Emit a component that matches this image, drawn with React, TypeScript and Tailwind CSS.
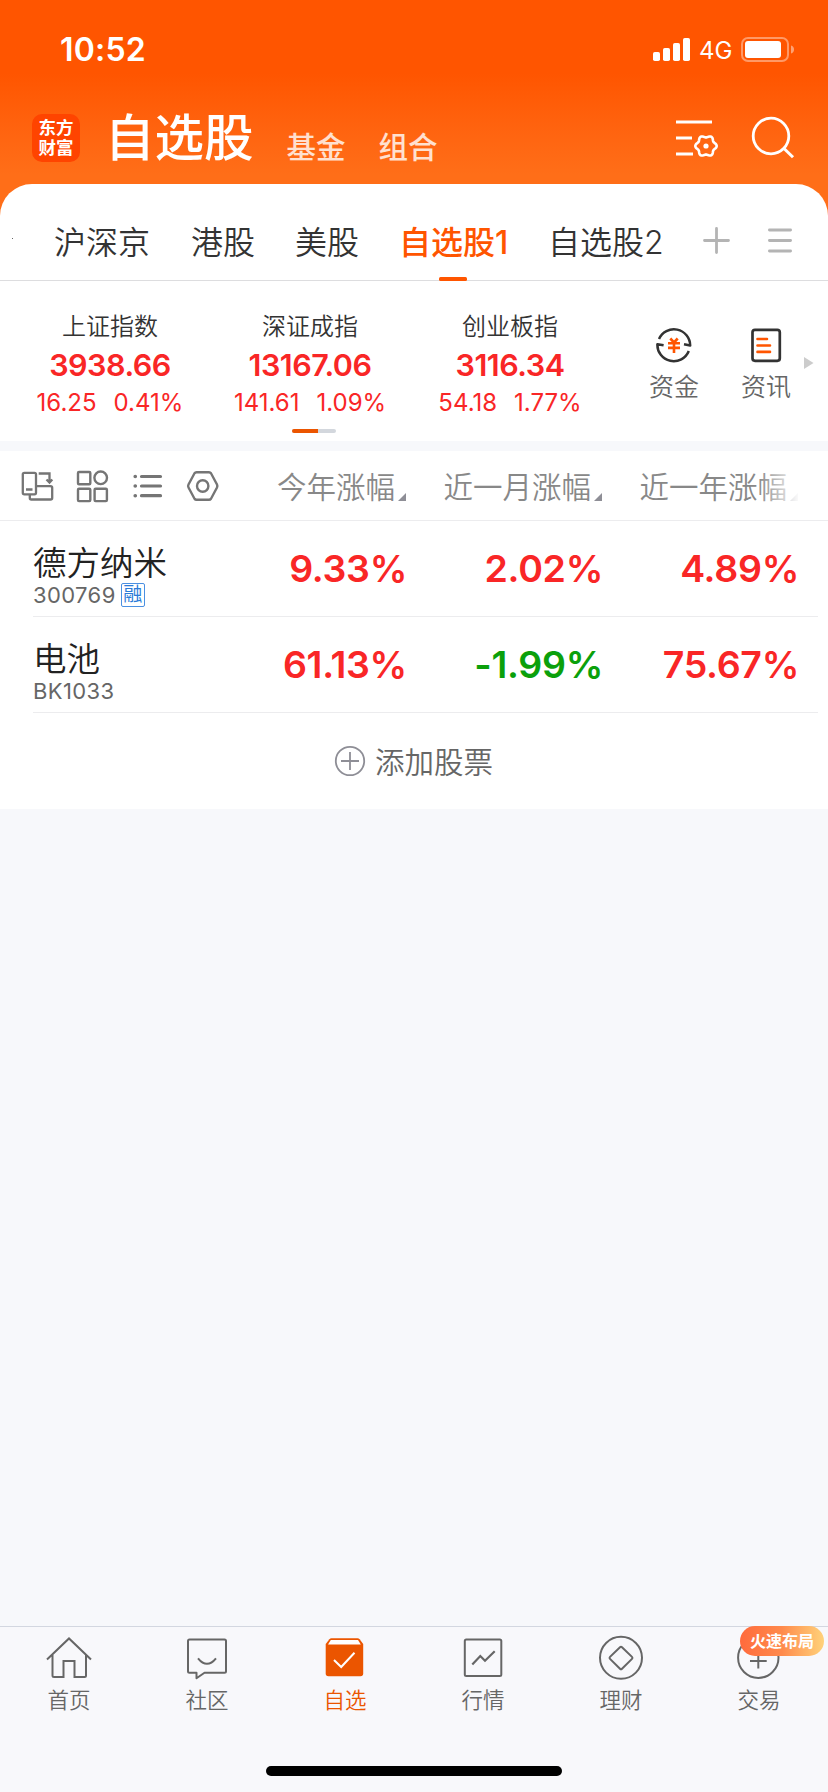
import type { ReactNode } from "react";

interface IndexQuote {
  name: string;
  value: string;
  change: string;
  percent: string;
}

interface StockRow {
  name: string;
  code: string;
  margin?: boolean;
  values: string[];
}

const indices: IndexQuote[] = [
  { name: "上证指数", value: "3938.66", change: "16.25", percent: "0.41%" },
  { name: "深证成指", value: "13167.06", change: "141.61", percent: "1.09%" },
  { name: "创业板指", value: "3116.34", change: "54.18", percent: "1.77%" },
];

const columns = ["今年涨幅", "近一月涨幅", "近一年涨幅"];

const stocks: StockRow[] = [
  { name: "德方纳米", code: "300769", margin: true, values: ["9.33%", "2.02%", "4.89%"] },
  { name: "电池", code: "BK1033", values: ["61.13%", "-1.99%", "75.67%"] },
];

// six-lobed outline of the settings gear
const gearPath = (() => {
  const pts: string[] = [];
  for (let i = 0; i < 72; i++) {
    const a = (i / 72) * Math.PI * 2;
    const r = 9.6 + 1.1 * Math.cos(6 * a);
    pts.push(`${(31 + r * Math.cos(a)).toFixed(2)} ${(31 + r * Math.sin(a)).toFixed(2)}`);
  }
  return `M${pts.join("L")}Z`;
})();

function StatusBar() {
  return (
    <div className="flex h-[88px] items-start justify-between pl-[60px] pr-[33px] text-white">
      <span className="mt-[34px] text-[32px] leading-none font-semibold tracking-[0.2px]">10:52</span>
      <div className="mt-[36px] flex h-[27px] items-center">
        <svg className="h-[27px] w-[38px]" viewBox="0 0 38 27" fill="currentColor">
          <rect x="0" y="16" width="7" height="9" rx="1.8" />
          <rect x="10" y="12" width="7" height="13" rx="1.8" />
          <rect x="20" y="7" width="7" height="18" rx="1.8" />
          <rect x="30" y="2" width="7" height="23" rx="1.8" />
        </svg>
        <span className="ml-[8px] w-[42px] pt-[2px] text-[24px] leading-none">4G</span>
        <svg className="h-[27px] w-[54px]" viewBox="0 0 54 27">
          <rect x="1" y="2" width="46" height="23" rx="6" fill="none" stroke="#fff" strokeOpacity="0.4" strokeWidth="2" />
          <rect x="4" y="5" width="36" height="17" rx="3" fill="#fff" />
          <path d="M50 9.500c2 .6 3 2 3 4s-1 3.400-3 4z" fill="#fff" fillOpacity="0.45" />
        </svg>
      </div>
    </div>
  );
}

function Header() {
  return (
    <header className="h-[184px] shrink-0 bg-linear-to-b from-[#ff5500] from-40% to-[#ff6e18] to-95%">
      <StatusBar />
      <div className="flex h-[96px] items-start pl-[32px] pr-[33px] text-white">
        <div className="mt-[26px] flex h-[48px] w-[48px] flex-col items-center justify-center rounded-[10px] bg-[#ff4400] text-[17.500px] leading-[20px] font-bold">
          <span>东方</span>
          <span>财富</span>
        </div>
        <h1 className="ml-[25px] mt-[26px] text-[49.500px] leading-none font-medium">自选股</h1>
        <span className="ml-[33px] mt-[45px] text-[29.500px] leading-none font-medium text-white/80">基金</span>
        <span className="ml-[33px] mt-[45px] text-[29.500px] leading-none font-medium text-white/80">组合</span>
        <div className="mt-[27px] ml-auto flex gap-[32px]">
          <svg className="h-[42px] w-[44px]" viewBox="0 0 44 42" fill="none" stroke="currentColor" strokeWidth="2.8">
            <path d="M1 7H37M1 23H17M1 39H18" />
            <path d={gearPath} strokeLinejoin="round" strokeWidth="2.600" />
            <circle cx="31" cy="31" r="2.600" fill="currentColor" stroke="none" />
          </svg>
          <svg className="h-[44px] w-[44px]" viewBox="0 0 44 44" fill="none" stroke="currentColor" strokeWidth="2.800">
            <circle cx="20" cy="21" r="17.800" />
            <path d="M33 33.500L42 42.300" strokeWidth="3" />
          </svg>
        </div>
      </div>
    </header>
  );
}

function GroupTabs() {
  return (
    <nav className="flex h-[97px] items-start border-b border-[#dddddf] pt-[42px] text-[32px] leading-none text-[#333]">
      <span className="mt-[12px] ml-[12px] h-px w-px bg-[#666]" />
      <span className="mt-px ml-[41px] w-[137px] font-[350]">沪深京</span>
      <span className="mt-px w-[104px] font-[350]">港股</span>
      <span className="mt-px w-[104px] font-[350]">美股</span>
      <span className="relative mt-px w-[149px] font-medium text-[#ff5500]">
        自选股1
        <span className="absolute top-[50px] left-[40px] h-[4px] w-[28px] rounded-[1.500px] bg-[#ff5500]" />
      </span>
      <span className="mt-px w-[155px] font-[350]">自选股2</span>
      <svg className="mt-px h-[27px] w-[27px]" viewBox="0 0 27 27" stroke="#b4b4b4" strokeWidth="2.800" strokeLinecap="round">
        <path d="M1.500 13.500H25.500M13.500 1.500V25.500" />
      </svg>
      <svg className="mt-px ml-[38px] h-[27px] w-[24px]" viewBox="0 0 24 27" stroke="#b4b4b4" strokeWidth="2.800" strokeLinecap="round">
        <path d="M1.400 3H22.600M1.400 13.500H22.600M1.400 24H22.600" />
      </svg>
    </nav>
  );
}

function IndexStrip() {
  return (
    <section className="relative flex h-[160px] pl-[10px]">
      {indices.map((q) => (
        <div key={q.name} className="flex w-[200px] flex-col items-center pt-[34px] text-[#f92626]">
          <span className="text-[24px] leading-none font-[350] text-[#333]">{q.name}</span>
          <span className="mt-[11px] text-[30.500px] leading-none font-semibold tracking-[-0.5px]">{q.value}</span>
          <span className="mt-[10px] flex gap-[17px] text-[24px] leading-none font-normal">
            <span>{q.change}</span>
            <span>{q.percent}</span>
          </span>
        </div>
      ))}
      <div className="ml-[18px] flex w-[92px] flex-col items-center pt-[44px] text-[25px] leading-none font-[350] text-[#666]">
        <svg className="h-[38px] w-[38px]" viewBox="0 0 38 38" fill="none" stroke="#333" strokeWidth="2.500">
          <path d="M4 14A16.300 16.300 0 0 1 35.200 20.500L29 19.200" strokeLinejoin="round" />
          <path d="M8.600 20.300L2.400 19.200A16.300 16.300 0 0 0 33.800 26" strokeLinejoin="round" />
          <path d="M15.300 13.500L19 17.500L22.700 13.500M13 18.300H25M13 22.900H25M19 17.500V28" stroke="#ff5500" strokeWidth="2.600" />
        </svg>
        <span className="mt-[12px]">资金</span>
      </div>
      <div className="flex w-[92px] flex-col items-center pt-[44px] text-[25px] leading-none font-[350] text-[#666]">
        <svg className="h-[38px] w-[38px]" viewBox="0 0 38 38" fill="none" stroke="#333" strokeWidth="2.700">
          <rect x="5.500" y="4.800" width="27.300" height="31" rx="2.500" />
          <path d="M10.500 14H20M10.500 20.500H23M10.500 26.900H23" stroke="#ff5500" strokeWidth="2.600" strokeLinecap="round" />
        </svg>
        <span className="mt-[12px]">资讯</span>
      </div>
      <svg className="mt-[76px] -ml-[8px] h-[12px] w-[10px]" viewBox="0 0 10 12" fill="#ccc">
        <path d="M0 0L9.500 6L0 12Z" />
      </svg>
      <div className="absolute bottom-[8px] left-[292px] flex h-[4px] w-[44px] overflow-hidden rounded-full bg-[#d3d7dd]">
        <span className="w-[26px] bg-[#eb5500]" />
      </div>
    </section>
  );
}

function TableHeader() {
  return (
    <div className="relative flex h-[70px] items-start border-b border-[#ececee] pt-[17px] pl-[20px]">
      <div className="flex w-[258px] text-[#757575]">
        <svg className="h-[36px] w-[54px]" viewBox="0 0 54 36" fill="none" stroke="currentColor" strokeWidth="2.300">
          <rect x="2.800" y="4.800" width="13.200" height="21.500" rx="1.500" />
          <path d="M6 21.500H12.500M18.700 5.500H29.500V14M26.500 11.500L29.500 14.500L32.300 11.500" />
          <path d="M9.800 26.500V30Q9.800 31.500 11.300 31.500H30.500Q32.200 31.500 32.200 30V19.800Q32.200 18.200 30.500 18.200H16.500" />
        </svg>
        <svg className="h-[36px] w-[56px]" viewBox="0 0 56 36" fill="none" stroke="currentColor" strokeWidth="2.400">
          <rect x="4" y="4" width="12.300" height="12.300" rx="1" />
          <circle cx="26.700" cy="9.800" r="6.300" />
          <rect x="4" y="20.800" width="12.300" height="12.300" rx="1" />
          <rect x="20.600" y="20.800" width="12.300" height="12.300" rx="1" />
        </svg>
        <svg className="h-[36px] w-[55px]" viewBox="0 0 55 36" fill="none" stroke="currentColor" strokeWidth="3.200" strokeLinecap="round">
          <path d="M11.500 8.500H30.500M11.500 18H30.500M11.500 27.700H30.500" />
          <path d="M5.200 8.500H5.300M5.200 18H5.300M5.200 27.700H5.300" strokeWidth="3.600" />
        </svg>
        <svg className="h-[36px] w-[36px]" viewBox="0 0 36 36" fill="none" stroke="currentColor" strokeWidth="2.400">
          <path d="M11.500 4.300H24Q25.300 4.300 26 5.300L32 16.500Q32.700 18 32 19.500L26 30.700Q25.300 31.700 24 31.700H11.500Q10.200 31.700 9.500 30.700L3.500 19.500Q2.700 18 3.500 16.500L9.500 5.300Q10.200 4.300 11.500 4.300Z" />
          <circle cx="17.700" cy="18" r="5.700" />
        </svg>
      </div>
      {columns.map((c, i) => (
        <div key={c} className={`flex justify-end ${i === 0 ? "w-[128px]" : "w-[196px]"}`}>
          <span className="mt-[5px] text-[29.500px] leading-none font-[350] whitespace-nowrap text-[#888]">{c}</span>
          <svg className="mt-[25px] ml-[3px] h-[8px] w-[8px] shrink-0" viewBox="0 0 8 8" fill="#8e8e96">
            <path d="M8 0V8H0Z" />
          </svg>
        </div>
      ))}
      <div className="absolute top-0 right-0 h-[68px] w-[70px] bg-linear-to-r from-white/0 to-white to-60%" />
    </div>
  );
}

function StockItem({ stock }: { stock: StockRow }) {
  return (
    <div className="mr-[10px] ml-[33px] flex h-[96px] border-b border-[#ececee]">
      <div className="w-[178px] pt-[26px]">
        <div className="text-[33.500px] leading-none font-[350] text-[#222]">{stock.name}</div>
        <div className="mt-px flex h-[26px] items-center text-[22px] leading-none font-normal tracking-[0.4px] text-[#666]">
          {stock.code}
          {stock.margin && (
            <span className="ml-[5px] flex h-[24px] w-[24px] items-center justify-center rounded-[2px] border border-[#4a90e2] text-[19px] tracking-normal text-[#2b7bd8]">
              融
            </span>
          )}
        </div>
      </div>
      {stock.values.map((v) => (
        <div
          key={v}
          className={`w-[196px] pt-[29px] text-right text-[37.500px] leading-none font-semibold tracking-[-0.3px] ${v.startsWith("-") ? "text-[#0ba00b]" : "text-[#f92626]"}`}
        >
          {v}
        </div>
      ))}
    </div>
  );
}

function TabItem({ label, active, children }: { label: string; active?: boolean; children: ReactNode }) {
  return (
    <div className={`relative flex w-[138px] flex-col items-center pt-[7px] ${active ? "text-[#eb5500]" : "text-[#666]"}`}>
      <svg className="h-[46px] w-[46px]" viewBox="0 0 46 46" fill="none" stroke="currentColor" strokeWidth="2">
        {children}
      </svg>
      <span className="mt-[10px] text-[21.500px] leading-none font-[350]">{label}</span>
      {label === "交易" && (
        <span className="absolute -top-px left-[50px] flex h-[30px] w-[84px] items-center justify-center rounded-full bg-linear-to-r from-[#ff6a3c] via-[#ff8a4c] to-[#ffd27a] text-[16px] leading-none font-bold text-white">
          火速布局
        </span>
      )}
    </div>
  );
}

function TabBar() {
  return (
    <footer className="h-[166px] shrink-0 border-t border-[#d3d7e0] bg-[#f8f8fb]">
      <div className="flex h-[139px]">
        <TabItem label="首页">
          <path d="M1 25.500L23 4.500L45 25.500M6.500 21V41.500Q6.500 43 8 43H17.500V27H28.500V43H38.500Q40 43 40 41.500V21" />
        </TabItem>
        <TabItem label="社区">
          <path d="M20.500 38.800H40.500Q42 38.800 42 37.300V7Q42 5.500 40.500 5.500H5.500Q4 5.500 4 7V37.300Q4 38.800 5.500 38.800H12.500V44.300Z" strokeLinejoin="round" />
          <path d="M14 24.300Q23 35.300 32 24.300" />
        </TabItem>
        <TabItem label="自选" active>
          <path d="M9.500 4.300H35.500Q36.800 4.300 37.600 5.200L41.200 10V39.500Q41.200 42.300 38.500 42.300H6.500Q3.700 42.300 3.700 39.500V10L7.400 5.200Q8.200 4.300 9.500 4.300Z" fill="currentColor" stroke="none" />
          <path d="M8.800 6H36L38.800 10.600H6Z" fill="#fff" stroke="none" />
          <path d="M12 26L19.200 33L32.500 18.700" stroke="#fff" strokeWidth="2" />
        </TabItem>
        <TabItem label="行情">
          <rect x="4.800" y="5.600" width="36.500" height="36.500" rx="1.500" />
          <path d="M12.300 30.500L20.300 22L25 26.700L34.700 17.300" strokeWidth="2.200" />
        </TabItem>
        <TabItem label="理财">
          <circle cx="23" cy="23.800" r="21" />
          <path d="M22 13.200Q23 12.200 24 13.200L34 22.900Q35 23.900 34 24.900L24 34.800Q23 35.800 22 34.800L12 24.900Q11 23.900 12 22.900Z" />
        </TabItem>
        <TabItem label="交易">
          <circle cx="22.300" cy="23.700" r="20.200" />
          <path d="M14 27H30.700M22.300 18V34.500" />
        </TabItem>
      </div>
      <div className="mx-auto h-[10px] w-[296px] rounded-full bg-black" />
    </footer>
  );
}

export default function App() {
  return (
    <div className="flex h-[1792px] w-[828px] flex-col overflow-hidden bg-[#f7f8fb] font-['Inter','Noto_Sans_CJK_SC',sans-serif]">
      <Header />
      <div className="bg-[#ff6e18]">
        <div className="rounded-t-[32px] bg-white">
          <GroupTabs />
          <IndexStrip />
        </div>
      </div>
      <main className="mt-[10px] flex-1">
        <div className="bg-white">
          <TableHeader />
          {stocks.map((s) => (
            <StockItem key={s.code} stock={s} />
          ))}
          <div className="flex h-[96px] items-center justify-center gap-[9px] pr-px text-[#666]">
            <svg className="h-[32px] w-[32px]" viewBox="0 0 32 32" fill="none" stroke="#8e8e96" strokeWidth="1.800">
              <circle cx="16" cy="16" r="14.200" />
              <path d="M7 16H25M16 7V25" />
            </svg>
            <span className="pt-[3px] text-[29.500px] leading-none font-[350]">添加股票</span>
          </div>
        </div>
      </main>
      <TabBar />
    </div>
  );
}
